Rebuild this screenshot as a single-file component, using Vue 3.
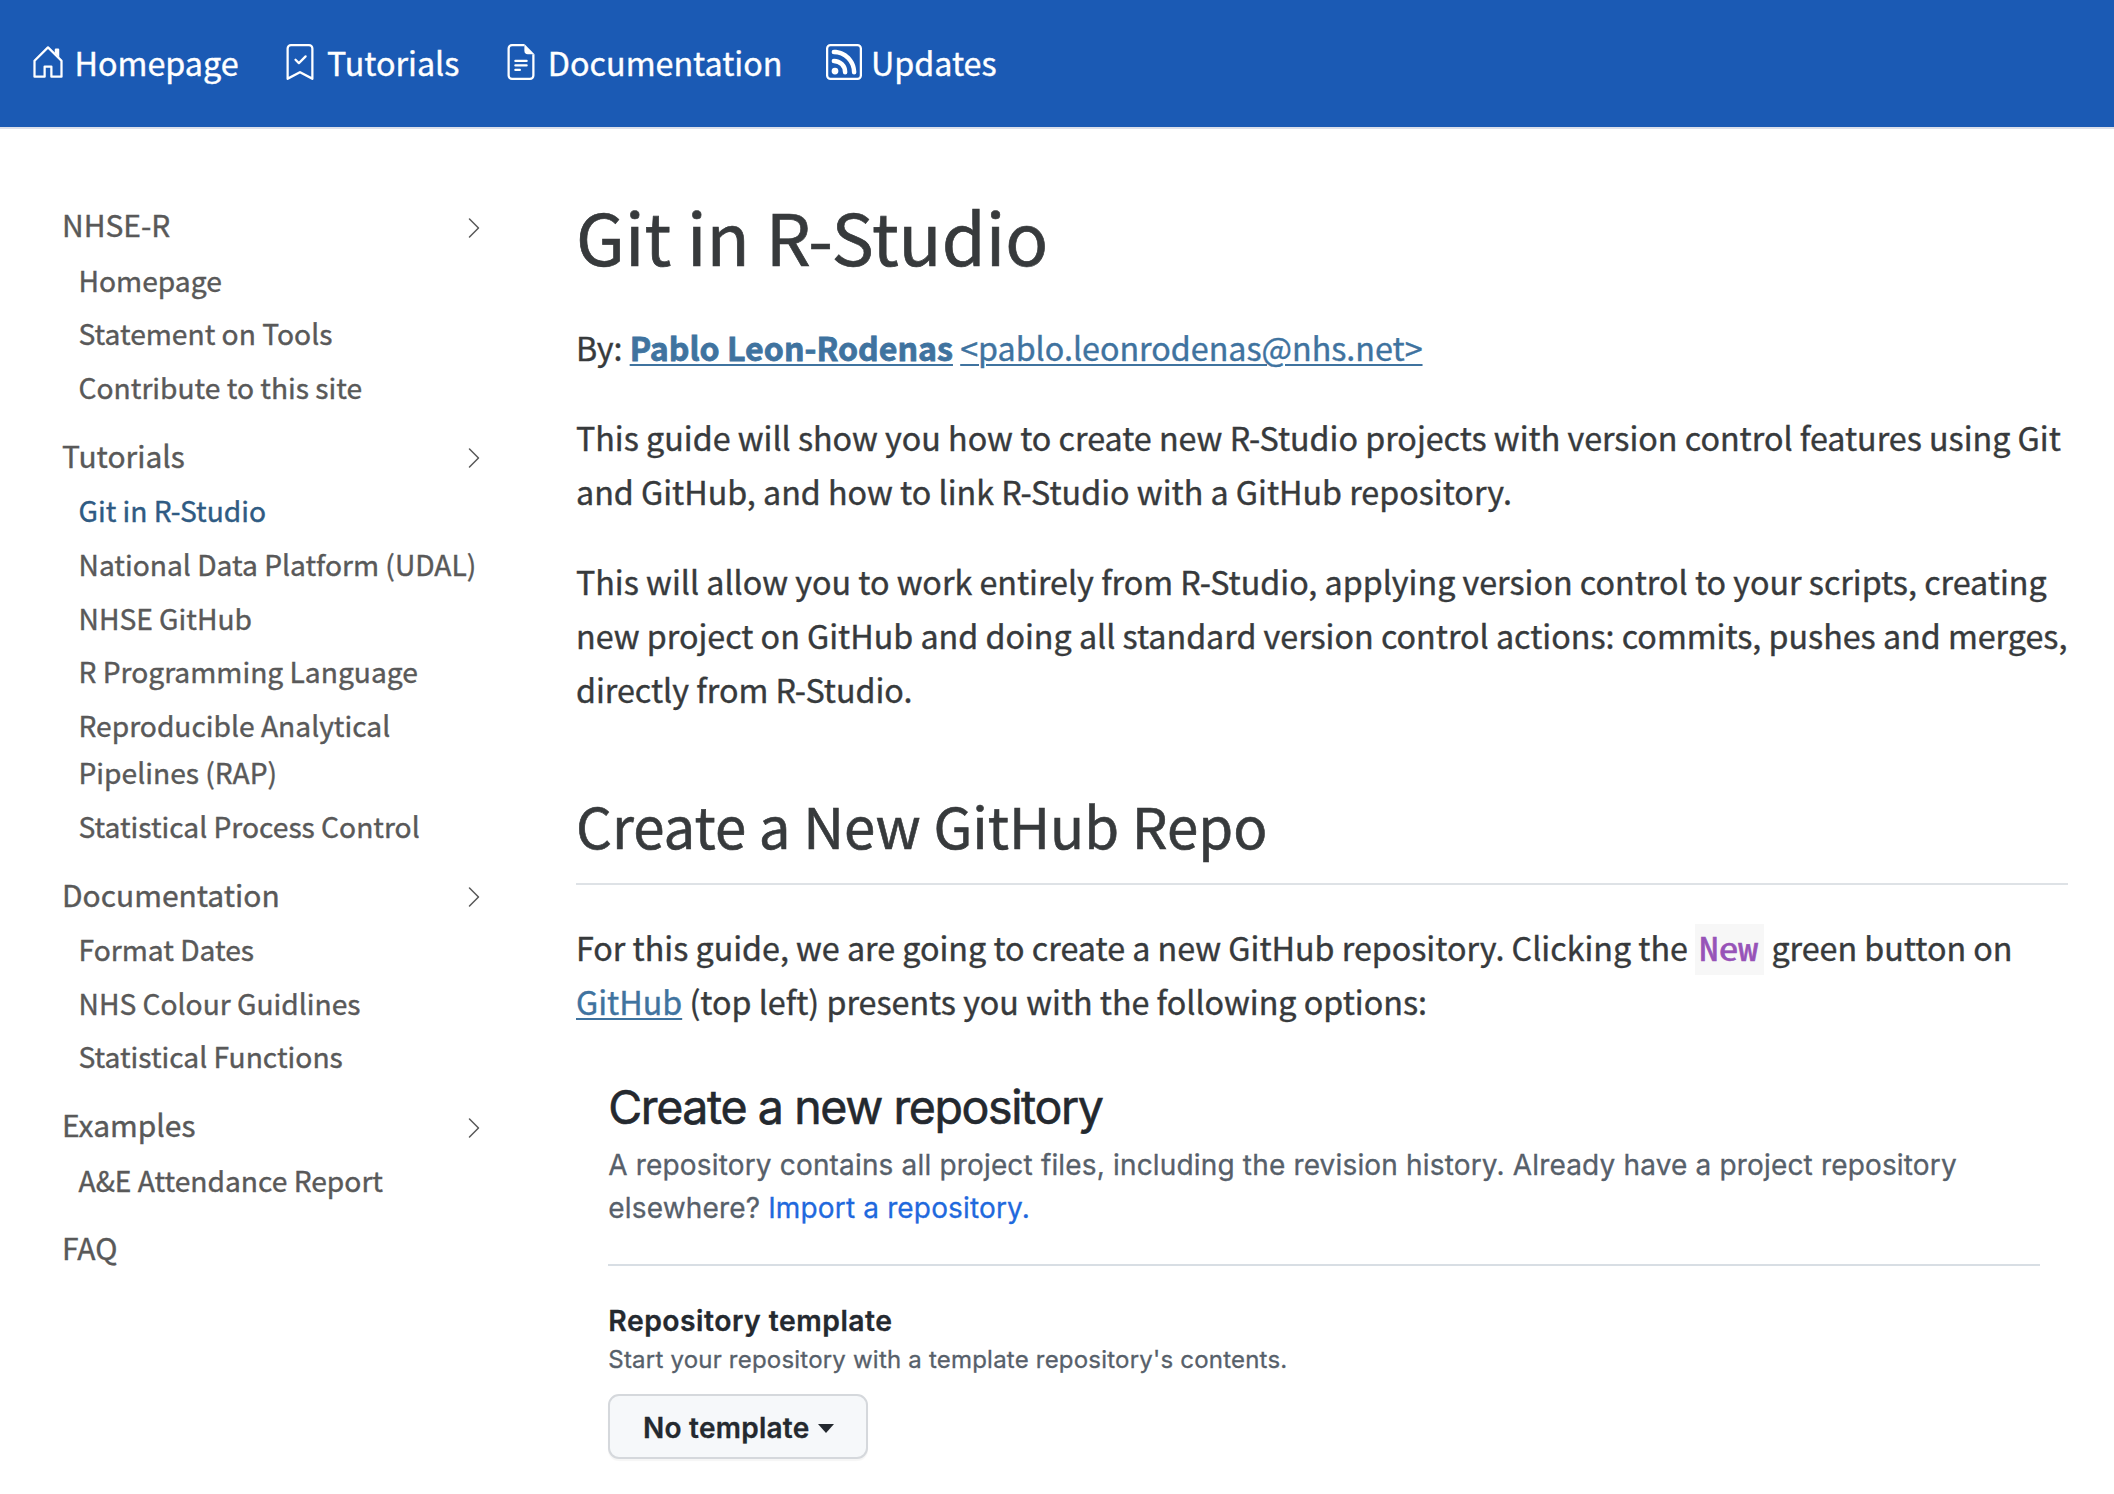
<script setup>
const navItems = [
  {
    label: 'Homepage',
    paths: [
      'M7.646 1.146a.5.5 0 0 1 .708 0l6 6a.5.5 0 0 1 .146.354v7a.5.5 0 0 1-.5.5H9.5a.5.5 0 0 1-.5-.5v-4H7v4a.5.5 0 0 1-.5.5H2a.5.5 0 0 1-.5-.5v-7a.5.5 0 0 1 .146-.354l6-6zM2.5 7.707V14H6v-4a.5.5 0 0 1 .5-.5h3a.5.5 0 0 1 .5.5v4h3.5V7.707L8 2.207l-5.5 5.5z',
      'M13 2.5V6l-2-2V2.5a.5.5 0 0 1 .5-.5h1a.5.5 0 0 1 .5.5z',
    ],
  },
  {
    label: 'Tutorials',
    paths: [
      'M2 2a2 2 0 0 1 2-2h8a2 2 0 0 1 2 2v13.5a.5.5 0 0 1-.777.416L8 13.101l-5.223 2.815A.5.5 0 0 1 2 15.5V2zm2-1a1 1 0 0 0-1 1v12.566l4.723-2.482a.5.5 0 0 1 .554 0L13 14.566V2a1 1 0 0 0-1-1H4z',
      'M10.854 5.146a.5.5 0 0 1 0 .708l-3 3a.5.5 0 0 1-.708 0l-1.5-1.5a.5.5 0 1 1 .708-.708L7.5 7.793l2.646-2.647a.5.5 0 0 1 .708 0z',
    ],
  },
  {
    label: 'Documentation',
    paths: [
      'M4 0h5.5v1H4a1 1 0 0 0-1 1v12a1 1 0 0 0 1 1h8a1 1 0 0 0 1-1V4.5h1V14a2 2 0 0 1-2 2H4a2 2 0 0 1-2-2V2a2 2 0 0 1 2-2z',
      'M9.5 3V0L14 4.5h-3A1.5 1.5 0 0 1 9.5 3z',
      'M5 7.5a.5.5 0 0 1 .5-.5h5a.5.5 0 0 1 0 1h-5a.5.5 0 0 1-.5-.5zm0 2a.5.5 0 0 1 .5-.5h5a.5.5 0 0 1 0 1h-5a.5.5 0 0 1-.5-.5zm0 2a.5.5 0 0 1 .5-.5h2a.5.5 0 0 1 0 1h-2a.5.5 0 0 1-.5-.5z',
    ],
  },
  {
    label: 'Updates',
    paths: [
      'M14 1H2a1 1 0 0 0-1 1v12a1 1 0 0 0 1 1h12a1 1 0 0 0 1-1V2a1 1 0 0 0-1-1zM2 0a2 2 0 0 0-2 2v12a2 2 0 0 0 2 2h12a2 2 0 0 0 2-2V2a2 2 0 0 0-2-2H2z',
      'M5.5 12a1.5 1.5 0 1 1-3 0 1.5 1.5 0 0 1 3 0zm-3-8.5a1 1 0 0 1 1-1c5.523 0 10 4.477 10 10a1 1 0 1 1-2 0 8 8 0 0 0-8-8 1 1 0 0 1-1-1zm0 4a1 1 0 0 1 1-1 6 6 0 0 1 6 6 1 1 0 1 1-2 0 4 4 0 0 0-4-4 1 1 0 0 1-1-1z',
    ],
  },
]

const sections = [
  { title: 'NHSE-R', items: ['Homepage', 'Statement on Tools', 'Contribute to this site'] },
  {
    title: 'Tutorials',
    items: [
      'Git in R-Studio',
      'National Data Platform (UDAL)',
      'NHSE GitHub',
      'R Programming Language',
      'Reproducible Analytical Pipelines (RAP)',
      'Statistical Process Control',
    ],
  },
  { title: 'Documentation', items: ['Format Dates', 'NHS Colour Guidlines', 'Statistical Functions'] },
  { title: 'Examples', items: ['A&E Attendance Report'] },
  { title: 'FAQ', items: [] },
]
const active = 'Git in R-Studio'
</script>

<template>
  <div class="page">
    <header class="navbar">
      <a v-for="item in navItems" :key="item.label" class="nav-link">
        <svg class="nav-icon" viewBox="0 0 16 16" fill="currentColor" fill-rule="evenodd">
          <path v-for="(d, i) in item.paths" :key="i" :d="d" />
        </svg>
        <span>{{ item.label }}</span>
      </a>
    </header>

    <div class="columns">
      <nav class="sidebar">
        <section v-for="s in sections" :key="s.title" class="group">
          <div class="group-title">
            <span>{{ s.title }}</span>
            <svg v-if="s.items.length" class="chevron" viewBox="0 0 16 16" fill="currentColor">
              <path d="M4.646 1.646a.5.5 0 0 1 .708 0l6 6a.5.5 0 0 1 0 .708l-6 6a.5.5 0 0 1-.708-.708L10.293 8 4.646 2.354a.5.5 0 0 1 0-.708z" />
            </svg>
          </div>
          <ul v-if="s.items.length">
            <li v-for="item in s.items" :key="item" :class="{ active: item === active }">{{ item }}</li>
          </ul>
        </section>
      </nav>

      <main class="content">
        <h1>Git in R-Studio</h1>
        <p>By: <a class="link"><strong>Pablo Leon-Rodenas</strong></a> <a class="link">&lt;pablo.leonrodenas@nhs.net&gt;</a></p>
        <p>This guide will show you how to create new R-Studio projects with version control features using Git<br>and GitHub, and how to link R-Studio with a GitHub repository.</p>
        <p>This will allow you to work entirely from R-Studio, applying version control to your scripts, creating<br>new project on GitHub and doing all standard version control actions: commits, pushes and merges,<br>directly from R-Studio.</p>
        <h2>Create a New GitHub Repo</h2>
        <p>For this guide, we are going to create a new GitHub repository. Clicking the <code><span class="code-text">New</span></code> green button on<br><a class="link">GitHub</a> (top left) presents you with the following options:</p>

        <div class="repo">
          <h3>Create a new repository</h3>
          <p class="repo-lead">A repository contains all project files, including the revision history. Already have a project repository<br>elsewhere? <a class="import">Import a repository.</a></p>
          <div class="rule"></div>
          <h4>Repository template</h4>
          <p class="repo-note">Start your repository with a template repository's contents.</p>
          <button class="template-btn" type="button"><span>No template</span><i class="caret"></i></button>
        </div>
      </main>
    </div>
  </div>
</template>

<style>
body { background: #fff; }
</style>

<style scoped>
.page {
  width: 2114px;
  height: 1494px;
  overflow: hidden;
  box-sizing: border-box;
  font-family: "Noto Sans CJK SC", "Noto Sans", sans-serif;
  font-size: 32.24px;
  color: #373a3c;
  background: #fff;
  -webkit-text-stroke: 0.4px currentColor;
}
h1, h2, h3, h4, p, ul { margin: 0; padding: 0; font-weight: 400; }
.navbar {
  display: flex;
  align-items: center;
  gap: 43.5px;
  height: 129px;
  box-sizing: border-box;
  padding: 0 0 3.5px 29.5px;
  background: #1b5ab4;
  border-bottom: 2px solid #dde0ea;
  color: #fff;
  font-size: 32.27px;
}
.nav-link { display: flex; align-items: center; gap: 9px; }
.nav-icon { width: 36px; height: 36px; display: block; }

.columns { display: flex; align-items: flex-start; }
.sidebar {
  width: 422px;
  flex: none;
  padding: 72.4px 0 0 62px;
  color: #595959;
}
.group { margin-bottom: 21.8px; }
.group-title {
  display: flex;
  justify-content: space-between;
  align-items: center;
  font-size: 29.95px;
  line-height: 47px;
}
.chevron { width: 24px; height: 24px; margin-top: 6px; margin-right: -1.5px; }
.group ul {
  list-style: none;
  display: flex;
  flex-direction: column;
  gap: 6.7px;
  margin: 7.4px 0 0 16.5px;
  font-size: 28.2px;
  line-height: 47px;
}
.active { color: #2f5b83; }

.content { width: 1492px; margin-left: 92px; padding-top: 63.6px; }
h1 { font-size: 70.95px; line-height: 85px; margin-bottom: 42.4px; -webkit-text-stroke-width: 0.7px; }
.content > p { line-height: 54px; margin-bottom: 36px; white-space: nowrap; }
h2 {
  font-size: 56.42px;
  line-height: 68px;
  margin: 75px 0 35px;
  padding-bottom: 23.6px;
  border-bottom: 2px solid #dee2e6;
  -webkit-text-stroke-width: 0.6px;
}
.link {
  color: #3f739f;
  text-decoration: underline;
  text-decoration-thickness: 2px;
  text-underline-offset: 3px;
}
.link strong { font-weight: 700; font-size: 32.15px; -webkit-text-stroke-width: 0.8px; }
code {
  display: inline-block;
  box-sizing: border-box;
  width: 69px;
  padding: 0 0 4px 4px;
  margin-bottom: -4px;
  line-height: 47px;
  background: #f7f7f7;
  color: #9753b8;
  font-family: "Noto Sans Mono CJK SC", "DejaVu Sans Mono", monospace;
  font-size: 32px;
  -webkit-text-stroke-width: 0.55px;
}
.code-text { display: inline-block; transform: scaleX(1.23); transform-origin: 0 50%; }

.repo {
  margin: 49px 0 0 32.3px;
  width: 1431.5px;
  font-family: Inter, "Liberation Sans", sans-serif;
  color: #24292f;
  -webkit-text-stroke-width: 0.3px;
}
h3 { font-size: 46.5px; line-height: 60px; letter-spacing: -1.4px; -webkit-text-stroke-width: 0.6px; }
.repo-lead {
  margin-top: 7.6px;
  font-size: 28px;
  line-height: 42.5px;
  letter-spacing: 0.165px;
  color: #57606a;
  white-space: nowrap;
}
.import { color: #1f69dd; letter-spacing: 0.15px; }
.rule { height: 2px; margin: 35.2px 0 33.5px; background: #d8dee4; }
h4 { font-size: 28.3px; line-height: 42px; font-weight: 600; letter-spacing: 0.5px; }
.repo-note { font-size: 24px; line-height: 36px; letter-spacing: 0.21px; color: #57606a; }
.template-btn {
  display: flex;
  align-items: center;
  gap: 8px;
  width: 260px;
  height: 65px;
  box-sizing: border-box;
  margin-top: 16px;
  padding: 4px 0 0 32.7px;
  border: 2px solid #d5d8dc;
  border-radius: 11px;
  background: #f6f8fa;
  box-shadow: 0 2px 1px rgba(27, 31, 36, 0.04);
  font-family: inherit;
  font-size: 28px;
  font-weight: 600;
  letter-spacing: 0.25px;
  color: #24292f;
  white-space: nowrap;
}
.caret {
  width: 0;
  height: 0;
  margin-top: 1px;
  border: 8px solid transparent;
  border-top: 9px solid #24292f;
  border-bottom: 0;
}
</style>
